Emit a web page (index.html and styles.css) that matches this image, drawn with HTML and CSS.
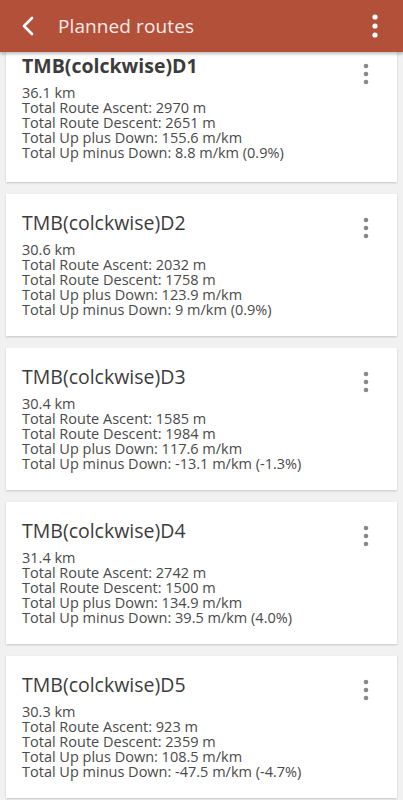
FILE: index.html
```html
<!DOCTYPE html>
<html>
<head>
<meta charset="utf-8">
<link rel="stylesheet" href="styles.css">
</head>
<body>
<header class="appbar">
  <svg class="back" width="16" height="22" viewBox="0 0 16 22"><path d="M12 3 L4 11 L12 19" fill="none" stroke="#fff" stroke-width="2.6" stroke-linecap="round" stroke-linejoin="round"/></svg>
  <h1 class="title">Planned routes</h1>
  <svg class="menu" width="8" height="26" viewBox="0 0 8 26"><circle cx="4" cy="4" r="2.6" fill="#fff"/><circle cx="4" cy="13" r="2.6" fill="#fff"/><circle cx="4" cy="22" r="2.6" fill="#fff"/></svg>
</header>
<main class="list">
  <section class="card">
    <div class="card-body">
      <h2 class="route bold">TMB(colckwise)D1</h2>
      <div class="stats"><div>36.1 km</div><div>Total Route Ascent: 2970 m</div><div>Total Route Descent: 2651 m</div><div>Total Up plus Down: 155.6 m/km</div><div>Total Up minus Down: 8.8 m/km (0.9%)</div></div>
    </div>
    <svg class="kebab" width="6" height="22" viewBox="0 0 6 22"><circle cx="3" cy="3" r="2.3"/><circle cx="3" cy="11" r="2.3"/><circle cx="3" cy="19" r="2.3"/></svg>
  </section>
  <section class="card">
    <div class="card-body">
      <h2 class="route">TMB(colckwise)D2</h2>
      <div class="stats"><div>30.6 km</div><div>Total Route Ascent: 2032 m</div><div>Total Route Descent: 1758 m</div><div>Total Up plus Down: 123.9 m/km</div><div>Total Up minus Down: 9 m/km (0.9%)</div></div>
    </div>
    <svg class="kebab" width="6" height="22" viewBox="0 0 6 22"><circle cx="3" cy="3" r="2.3"/><circle cx="3" cy="11" r="2.3"/><circle cx="3" cy="19" r="2.3"/></svg>
  </section>
  <section class="card">
    <div class="card-body">
      <h2 class="route">TMB(colckwise)D3</h2>
      <div class="stats"><div>30.4 km</div><div>Total Route Ascent: 1585 m</div><div>Total Route Descent: 1984 m</div><div>Total Up plus Down: 117.6 m/km</div><div>Total Up minus Down: -13.1 m/km (-1.3%)</div></div>
    </div>
    <svg class="kebab" width="6" height="22" viewBox="0 0 6 22"><circle cx="3" cy="3" r="2.3"/><circle cx="3" cy="11" r="2.3"/><circle cx="3" cy="19" r="2.3"/></svg>
  </section>
  <section class="card">
    <div class="card-body">
      <h2 class="route">TMB(colckwise)D4</h2>
      <div class="stats"><div>31.4 km</div><div>Total Route Ascent: 2742 m</div><div>Total Route Descent: 1500 m</div><div>Total Up plus Down: 134.9 m/km</div><div>Total Up minus Down: 39.5 m/km (4.0%)</div></div>
    </div>
    <svg class="kebab" width="6" height="22" viewBox="0 0 6 22"><circle cx="3" cy="3" r="2.3"/><circle cx="3" cy="11" r="2.3"/><circle cx="3" cy="19" r="2.3"/></svg>
  </section>
  <section class="card">
    <div class="card-body">
      <h2 class="route">TMB(colckwise)D5</h2>
      <div class="stats"><div>30.3 km</div><div>Total Route Ascent: 923 m</div><div>Total Route Descent: 2359 m</div><div>Total Up plus Down: 108.5 m/km</div><div>Total Up minus Down: -47.5 m/km (-4.7%)</div></div>
    </div>
    <svg class="kebab" width="6" height="22" viewBox="0 0 6 22"><circle cx="3" cy="3" r="2.3"/><circle cx="3" cy="11" r="2.3"/><circle cx="3" cy="19" r="2.3"/></svg>
  </section>
</main>
</body>
</html>
```
FILE: styles.css
```css
html, body {
  margin: 0;
  padding: 0;
}
body {
  width: 403px;
  height: 800px;
  overflow: hidden;
  background: #f1f1f1;
  font-family: "Open Sans", "Noto Sans", sans-serif;
}
.appbar {
  position: relative;
  z-index: 2;
  height: 52px;
  background: #b3503a;
  display: flex;
  align-items: center;
  padding: 0 0 0 20px;
  box-shadow: 0 2px 3px rgba(0,0,0,0.25);
}
.back {
  flex: none;
}
.title {
  margin: 0 0 0 22px;
  flex: 1;
  font-size: 19px;
  font-weight: 400;
  color: #f7ebe6;
  letter-spacing: 0.1px;
}
.menu {
  flex: none;
  margin-right: 24px;
}
.list {
  position: relative;
  z-index: 1;
  margin-top: -12px;
  padding: 0 6px;
  display: flex;
  flex-direction: column;
  gap: 12px;
}
.card {
  background: #fff;
  height: 142px;
  box-sizing: border-box;
  display: flex;
  justify-content: space-between;
  padding: 17px 28px 0 16px;
  box-shadow: 0 1px 2px rgba(0,0,0,0.18);
}
.route {
  margin: 0;
  font-size: 19.5px;
  line-height: 24px;
  font-weight: 400;
  color: #3c3c3c;
}
.route.bold {
  font-weight: 700;
  margin-top: -3px;
  margin-bottom: 3px;
}
.stats {
  margin: 7px 0 0;
  font-size: 14.5px;
  line-height: 15px;
  color: #4a4a4a;
}
.stats div {
  height: 15px;
  white-space: nowrap;
}
.kebab {
  flex: none;
  margin-top: 6px;
  fill: #8a8a8a;
}
```
